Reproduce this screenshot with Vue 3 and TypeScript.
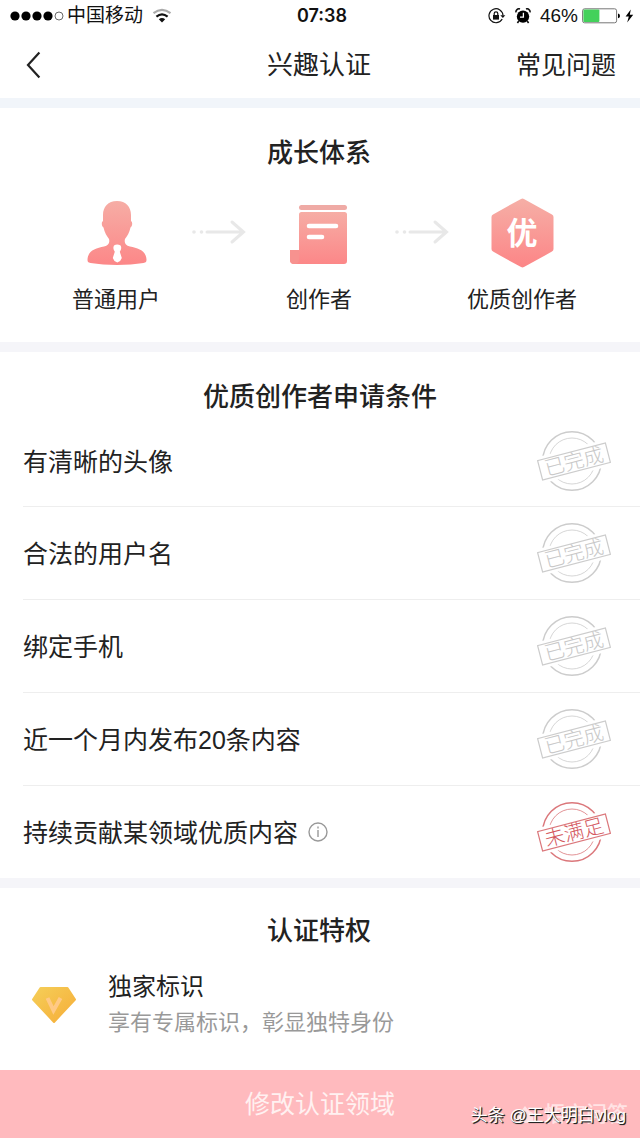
<script setup lang="ts">
interface Condition {
  label: string
  done: boolean
  info?: boolean
}

const conditions: Condition[] = [
  { label: '有清晰的头像', done: true },
  { label: '合法的用户名', done: true },
  { label: '绑定手机', done: true },
  { label: '近一个月内发布20条内容', done: true },
  { label: '持续贡献某领域优质内容', done: false, info: true },
]
</script>

<template>
  <div class="page">
    <div class="status">
      <div class="carrier">
        <svg width="54" height="14" viewBox="0 0 54 14" aria-hidden="true">
          <circle cx="5" cy="7" r="4.6" />
          <circle cx="16" cy="7" r="4.6" />
          <circle cx="27" cy="7" r="4.6" />
          <circle cx="38" cy="7" r="4.6" />
          <circle cx="49" cy="7" r="4" fill="none" stroke="#444" stroke-width="0.8" />
        </svg>
        <span>中国移动</span>
        <svg class="wifi" width="20" height="16" viewBox="0 0 20 16" fill="none" stroke-width="2.2" aria-hidden="true">
          <path d="M1.5 5.2Q10 -1.6 18.5 5.2" stroke="#aaa" />
          <path d="M4.4 8.6Q10 4 15.6 8.6" stroke="#111" />
          <path d="M6.8 11.2Q10 8.6 13.2 11.2L10 14.6Z" fill="#111" />
        </svg>
      </div>
      <time class="clock">07:38</time>
      <div class="indicators">
        <svg width="18" height="16" viewBox="0 0 18 16" fill="none" stroke="#111" stroke-width="1.2" aria-hidden="true">
          <path d="M14.2 11A7 7 0 1 1 15 7.6" />
          <path d="M12.3 7.2h5L14.9 10Z" fill="#111" stroke="none" />
          <rect x="5" y="7" width="6" height="4.6" fill="#111" stroke="none" />
          <path d="M6.2 7V5.6a1.8 1.8 0 0 1 3.6 0V7" />
        </svg>
        <svg class="alarm" width="16" height="16" viewBox="0 0 16 16" aria-hidden="true">
          <circle cx="8" cy="8.6" r="6.2" />
          <path d="M1 4.4A3 3 0 0 1 5 1M15 4.4A3 3 0 0 0 11 1M3.8 13 2.4 15M12.2 13l1.4 2" fill="none" stroke="#111" stroke-width="1.6" />
          <path d="M8.4 4.8v4.4H5" fill="none" stroke="#fff" stroke-width="1.3" />
        </svg>
        <span class="percent">46%</span>
        <svg width="52" height="16" viewBox="0 0 52 16" aria-hidden="true">
          <rect x="0.6" y="0.8" width="34" height="14" rx="2" fill="#fff" stroke="#777" />
          <rect x="1.4" y="1.6" width="16" height="12.4" rx="1" fill="#43d15b" />
          <path d="M36 5.6q2 .4 2 2.3t-2 2.3Z" />
          <path d="M48.8 1.6 43.6 8.6h3.2l-1.6 5.8 6-7.6h-3.4Z" />
        </svg>
      </div>
    </div>

    <header class="nav">
      <button class="back" type="button" aria-label="返回">
        <svg width="16" height="28" viewBox="0 0 16 28" fill="none" stroke="#222" stroke-width="2.2">
          <path d="M13.4 1.6 2 14l11.4 12.4" />
        </svg>
      </button>
      <h1>兴趣认证</h1>
      <a class="faq" href="#faq">常见问题</a>
    </header>

    <main>
      <section class="growth">
        <h2>成长体系</h2>
        <div class="steps">
          <div class="step">
            <svg width="70" height="70" viewBox="0 0 70 70" aria-hidden="true">
              <defs>
                <linearGradient id="coral" x1="0" y1="0" x2="0" y2="1">
                  <stop offset="0" stop-color="#f6ada5" />
                  <stop offset="1" stop-color="#fc8788" />
                </linearGradient>
              </defs>
              <path fill="url(#coral)" d="M36 3C45 3 50 9 50 17v6c1.800 1 1.500 5-.5 6.500-1 5-3.500 9-5.500 11.500-1 4 .5 6 5 7.500 8 1.500 16 4 16.500 13 0 2.500-.5 3-3 3.500-16 2.600-37 2.600-53 0-2.500-.5-3-1-3-3.500.5-9 8.500-11.500 16.500-13 4.500-1.500 6-3.500 5-7.500-2-2.500-4.500-6.500-5.500-11.500-2-1.500-2.300-5.500-.5-6.500v-6C22 9 27 3 36 3Z" />
              <path fill="#fff" d="M33 47.500q3-2 6.600 0 1.600 3-.8 6.200l2 6.300q-1 3.500-4.500 4.600-3.500-1.100-4.500-4.600l2-6.300q-2.400-3.200-.8-6.200Z" />
            </svg>
            <span>普通用户</span>
          </div>
          <svg class="arrow" width="56" height="26" viewBox="0 0 56 26" aria-hidden="true">
            <circle cx="4" cy="13" r="1.800" />
            <circle cx="11.500" cy="13" r="1.800" />
            <path d="M17 13h35M42 3l11.500 10L42 23" />
          </svg>
          <div class="step">
            <svg width="70" height="70" viewBox="0 0 70 70" fill="url(#coral)" aria-hidden="true">
              <rect x="15" y="7" width="48" height="5" rx="2.500" fill="#efaaa5" />
              <path d="M17.500 14h43a2.500 2.500 0 0 1 2.500 2.500V63a3 3 0 0 1-3 3H10q-4 0-4-4V52h9V16.500a2.500 2.500 0 0 1 2.500-2.500Z" />
              <path d="M6 52h9v10q0 4-4.500 4T6 62Z" fill="#f7928f" />
              <path d="M25 28h27M25 39h13" stroke="#fff" stroke-width="4.600" stroke-linecap="round" />
            </svg>
            <span>创作者</span>
          </div>
          <svg class="arrow" width="56" height="26" viewBox="0 0 56 26" aria-hidden="true">
            <circle cx="4" cy="13" r="1.800" />
            <circle cx="11.500" cy="13" r="1.800" />
            <path d="M17 13h35M42 3l11.500 10L42 23" />
          </svg>
          <div class="step">
            <svg width="70" height="70" viewBox="0 0 70 70" aria-hidden="true">
              <path fill="url(#coral)" stroke="url(#coral)" stroke-width="6" stroke-linejoin="round" d="M35.500 3.500 63.500 19v32L35.500 66.500 7.500 51V19Z" />
              <text x="35" y="46" class="mark">优</text>
            </svg>
            <span>优质创作者</span>
          </div>
        </div>
      </section>

      <section class="requirements">
        <h2>优质创作者申请条件</h2>
        <ul>
          <li v-for="item in conditions" :key="item.label">
            <span class="label">{{ item.label }}</span>
            <button v-if="item.info" class="info" type="button" aria-label="说明">
              <svg width="20" height="20" viewBox="0 0 20 20" fill="none" stroke="#999" stroke-width="1.400">
                <circle cx="10" cy="10" r="9" />
                <path d="M10 8v7M10 4.600v2" />
              </svg>
            </button>
            <svg class="stamp" :class="{ pending: !item.done }" width="76" height="64" viewBox="0 0 76 64">
              <circle cx="36" cy="32" r="29.300" stroke-width="1.500" />
              <circle cx="36" cy="32" r="23" stroke-width="0.800" />
              <g transform="rotate(-14.500 38 32.500)">
                <rect x="-1" y="19" width="78" height="27" fill="#fff" stroke="none" />
                <rect x="3" y="22.500" width="70" height="20" stroke-width="1.200" />
                <text x="38" y="39.500">{{ item.done ? '已完成' : '未满足' }}</text>
              </g>
            </svg>
          </li>
        </ul>
      </section>

      <section class="privileges">
        <h2>认证特权</h2>
        <div class="privilege">
          <svg width="46" height="38" viewBox="0 0 46 38" aria-hidden="true">
            <defs>
              <linearGradient id="gold" x1="0" y1="0" x2="1" y2="1">
                <stop offset="0" stop-color="#f5ce58" />
                <stop offset="1" stop-color="#f6ad38" />
              </linearGradient>
            </defs>
            <path d="M9.500 2h27L44 13.500 23 36 2 13.500Z" fill="url(#gold)" stroke="url(#gold)" stroke-width="2" stroke-linejoin="round" />
            <path d="M16.500 12 22.500 24.500 29.500 12" fill="none" stroke="#ffc985" stroke-width="4" />
          </svg>
          <div>
            <h3>独家标识</h3>
            <p>享有专属标识，彰显独特身份</p>
          </div>
        </div>
      </section>
    </main>

    <footer>
      <button class="submit" type="button">修改认证领域</button>
      <div class="source">
        <svg width="22" height="20" viewBox="0 0 22 20" aria-hidden="true">
          <path d="M3 17V9l4-2 4-5 4 5 4 2v8l-4 2H7Z" fill="#fff" />
        </svg>
        <span>悟空问答</span>
      </div>
      <div class="credit">头条 @王大明白vlog</div>
    </footer>
  </div>
</template>

<style>
body {
  margin: 0;
  background: #fff;
}
</style>

<style scoped>
.page {
  min-height: 100vh;
  display: flex;
  flex-direction: column;
  color: #222;
  font-family: "Liberation Sans", "Noto Sans CJK SC", sans-serif;
}
svg {
  display: block;
  flex: none;
}
button {
  padding: 0;
  border: 0;
  background: none;
  font: inherit;
}
h1, h2, h3, p, ul {
  margin: 0;
  padding: 0;
}
.status {
  display: grid;
  grid-template-columns: 1fr auto 1fr;
  align-items: center;
  height: 32px;
  padding: 0 6px 0 10px;
  color: #111;
  font-size: 19px;
  line-height: 28px;
}
.carrier, .indicators {
  display: flex;
  align-items: center;
}
.carrier {
  gap: 3px;
}
.wifi {
  margin-left: 6px;
}
.clock {
  font-family: Inter, sans-serif;
  font-size: 18px;
  font-weight: 600;
}
.indicators {
  justify-content: flex-end;
}
.alarm {
  margin: 0 9px;
}
.percent {
  margin-right: 4px;
}
.nav {
  display: grid;
  grid-template-columns: 1fr auto 1fr;
  align-items: center;
  height: 66px;
  padding: 0 24px 0 26px;
}
.nav h1 {
  margin-right: 4px;
  font-size: 26px;
  font-weight: 400;
  line-height: 36px;
}
.back {
  justify-self: start;
}
.faq {
  justify-self: end;
  color: inherit;
  font-size: 25px;
  line-height: 36px;
  text-decoration: none;
}
section {
  border-top: 10px solid #f5f5f9;
}
h2 {
  font-size: 26px;
  font-weight: 500;
  line-height: 36px;
  text-align: center;
}
.growth {
  border-top-color: #f1f5fa;
  padding: 27px 58px 26px 56px;
}
.steps {
  display: flex;
  justify-content: space-between;
  margin-top: 27px;
}
.step {
  display: flex;
  flex-direction: column;
  align-items: center;
  width: 120px;
  gap: 16px;
  font-size: 22px;
  line-height: 32px;
  white-space: nowrap;
}
.arrow {
  margin-top: 21px;
  fill: #e8e8e8;
}
.arrow path {
  fill: none;
  stroke: #e8e8e8;
  stroke-width: 3;
  stroke-linecap: round;
}
.mark {
  fill: #fff;
  font-size: 31px;
  font-weight: 700;
  text-anchor: middle;
}
.requirements {
  padding-top: 27px;
}
ul {
  list-style: none;
}
li {
  display: flex;
  align-items: center;
  height: 92px;
  margin-left: 23px;
  padding-right: 28px;
  border-bottom: 1px solid #eee;
  font-size: 25px;
}
li:first-child {
  height: 91px;
}
li:last-child {
  border-bottom: 0;
}
.label {
  padding-bottom: 2px;
}
.info {
  margin-left: 10px;
}
.stamp {
  margin-left: auto;
  fill: none;
  stroke: #ccc;
}
.stamp text {
  fill: #c8c8c8;
  stroke: none;
  font-size: 20px;
  font-weight: 300;
  text-anchor: middle;
}
.stamp.pending {
  stroke: #db777b;
}
.stamp.pending text {
  fill: #d4585e;
}
.privileges {
  padding: 25px 33px 24px 31px;
}
.privilege {
  display: flex;
  align-items: center;
  gap: 31px;
  margin-top: 20px;
}
h3 {
  font-size: 24px;
  font-weight: 400;
  line-height: 36px;
}
p {
  color: #999;
  font-size: 22px;
  line-height: 36px;
}
footer {
  position: relative;
  margin-top: auto;
}
.submit {
  display: block;
  width: 100%;
  height: 68px;
  padding-bottom: 4px;
  background: #ffbabe;
  color: #fff1f1;
  font-size: 25px;
}
.source, .credit {
  position: absolute;
  pointer-events: none;
}
.source {
  right: 12px;
  bottom: 9px;
  display: flex;
  align-items: center;
  gap: 8px;
  color: #fff;
  font-size: 21px;
  font-weight: 500;
  line-height: 30px;
  opacity: 0.6;
}
.credit {
  right: 14px;
  bottom: 8px;
  color: #fff;
  font-size: 17px;
  line-height: 28px;
  text-shadow: 1px 1px 1px #222, 1px 1px 0 #333;
}
</style>
